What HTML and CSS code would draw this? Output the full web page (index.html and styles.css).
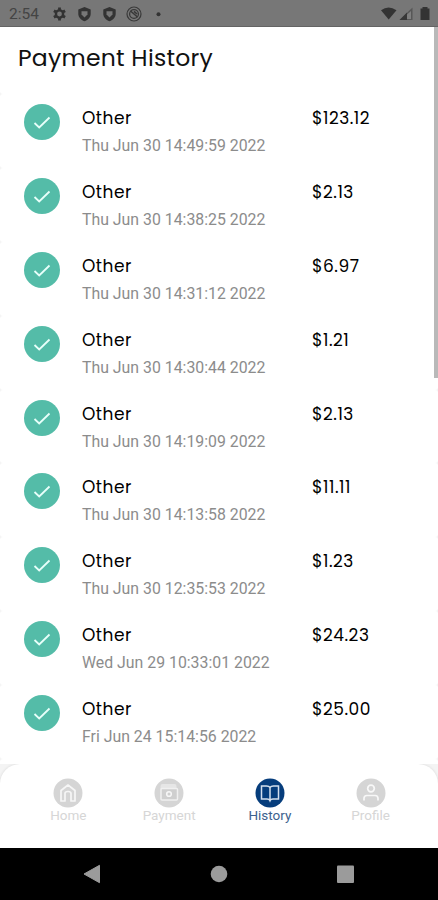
FILE: index.html
```html
<!DOCTYPE html>
<html lang="en">
<head>
    <meta charset="UTF-8">
    <meta name="viewport" content="width=device-width, initial-scale=1.0">
    <title>Payment History</title>
    <link rel="stylesheet" href="styles.css">
</head>
<body>

<div class="status-bar">
    <span class="clock">2:54</span>
    <svg class="status-left" width="112" height="16" viewBox="0 0 112 16">
        <circle cx="7.5" cy="8" r="3.6" fill="none" stroke="#333" stroke-width="2.4"/>
        <path d="M7.5 1.5v3M7.5 11.5v3M1.9 4.8l2.6 1.5M10.5 9.7l2.6 1.5M1.9 11.2l2.6-1.5M10.5 6.3l2.6-1.5" stroke="#333" stroke-width="2.8"/>
        <path d="M32.5 1l6.2 2.4v4.3c0 3.5-2.5 6.2-6.2 7.5-3.7-1.3-6.2-4-6.2-7.5V3.4z" fill="#333"/>
        <path d="M29.5 5.3h6v3.2l-3 3-3-3z" fill="#777"/>
        <path d="M57.5 1l6.2 2.4v4.3c0 3.5-2.5 6.2-6.2 7.5-3.7-1.3-6.2-4-6.2-7.5V3.4z" fill="#333"/>
        <path d="M54.5 5.3h6v3.2l-3 3-3-3z" fill="#777"/>
        <circle cx="82" cy="8" r="7" fill="none" stroke="#393939" stroke-width="1.2"/>
        <circle cx="82" cy="8" r="4.4" fill="none" stroke="#393939" stroke-width="1.3"/>
        <path d="M78.5 5l7 6M82 5.3l3 2.7" stroke="#393939" stroke-width="1.6"/>
        <circle cx="106.5" cy="8.2" r="2" fill="#333"/>
    </svg>
    <svg class="status-right" width="52" height="16" viewBox="0 0 52 16">
        <path d="M3 4.2Q10.5-1 18.5 4.2L10.700 13.500z" fill="#333"/>
        <path d="M34.500 1.500V14H21.500z" fill="#575757"/>
        <path d="M33 5v8h-4V8.500z" fill="#7f7f7f"/>
        <path d="M21.500 14L29 6.500V14z" fill="#383838"/>
        <path d="M42.500 2.500h2V1h5v1.500h2V14h-9z" fill="#333"/>
    </svg>
</div>

<div class="history" id="history">
    <h1>Payment History</h1>
    <div id="paymentList"></div>
    <div class="payment"></div>
    <div class="scroll-thumb"></div>
</div>

<div class="tabs">
    <div class="tab">
        <svg width="30" height="30" viewBox="0 0 30 30">
            <circle cx="15" cy="15" r="14.500" fill="#d5d5d5"/>
            <path d="M8 23V12.500L15 7l7 5.500V23h-4v-7.500q0-2-3-2t-3 2V23z" fill="none" stroke="#f6f6f6" stroke-width="1.700" stroke-linejoin="round"/>
        </svg>
        <span>Home</span>
    </div>
    <div class="tab">
        <svg width="30" height="30" viewBox="0 0 30 30">
            <circle cx="15" cy="15" r="14.500" fill="#d5d5d5"/>
            <path d="M6.500 11V8q0-2 2-2h12q2 0 2 2v3" fill="#e6e6e6"/>
            <rect x="7" y="10.500" width="16.500" height="11.500" rx="1" fill="#cfcfcf" stroke="#f0f0f0" stroke-width="1.500"/>
            <circle cx="15" cy="16" r="2.300" fill="none" stroke="#f6f6f6" stroke-width="1.600"/>
        </svg>
        <span>Payment</span>
    </div>
    <div class="tab active">
        <svg width="30" height="30" viewBox="0 0 30 30">
            <circle cx="15" cy="15" r="14.500" fill="#063d7c"/>
            <path d="M15 9.500Q14 8 11.500 8H6.500v13h5.500q2.300 0 3 1.700.7-1.700 3-1.700h5.500V8h-5Q16 8 15 9.500zM15 9.500V22" fill="none" stroke="#d5e0ed" stroke-width="1.500"/>
        </svg>
        <span>History</span>
    </div>
    <div class="tab">
        <svg width="30" height="30" viewBox="0 0 30 30">
            <circle cx="15" cy="15" r="14.500" fill="#d5d5d5"/>
            <circle cx="15" cy="10.500" r="3.300" fill="none" stroke="#f8f8f8" stroke-width="1.700"/>
            <path d="M8 22.500v-2q0-3 3-3h8q3 0 3 3v2" fill="none" stroke="#f8f8f8" stroke-width="1.700"/>
        </svg>
        <span>Profile</span>
    </div>
</div>

<div class="system-nav">
    <svg width="18" height="20" viewBox="0 0 18 20"><path d="M1 10L16.500 1.300v17.400z" fill="#9b9b9b" stroke="#9b9b9b" stroke-linejoin="round"/></svg>
    <svg width="18" height="20" viewBox="0 0 18 20"><circle cx="9" cy="10" r="8.300" fill="#9b9b9b"/></svg>
    <svg width="18" height="20" viewBox="0 0 18 20"><rect x="0" y="1.500" width="17" height="17.500" rx="1" fill="#9b9b9b"/></svg>
</div>

<script>
    const payments = [
        ['Thu Jun 30 14:49:59 2022', '$123.12'],
        ['Thu Jun 30 14:38:25 2022', '$2.13'],
        ['Thu Jun 30 14:31:12 2022', '$6.97'],
        ['Thu Jun 30 14:30:44 2022', '$1.21'],
        ['Thu Jun 30 14:19:09 2022', '$2.13'],
        ['Thu Jun 30 14:13:58 2022', '$11.11'],
        ['Thu Jun 30 12:35:53 2022', '$1.23'],
        ['Wed Jun 29 10:33:01 2022', '$24.23'],
        ['Fri Jun 24 15:14:56 2022', '$25.00']
    ];

    document.getElementById('paymentList').innerHTML = payments.map(([date, amount]) => `
        <div class="payment">
            <svg class="check" width="36" height="36" viewBox="0 0 36 36">
                <circle cx="18" cy="18" r="18" fill="#54bca8"/>
                <path d="M10.500 19l4.700 4.500L25.500 13.500" fill="none" stroke="#e8fffa" stroke-width="1.800"/>
            </svg>
            <div class="details">
                <div class="name">Other</div>
                <div class="date">${date}</div>
            </div>
            <div class="amount">${amount}</div>
        </div>`).join('');
</script>

</body>
</html>
```
FILE: styles.css
```css
* {
    box-sizing: border-box;
}

body {
    margin: 0;
    height: 900px;
    display: flex;
    flex-direction: column;
    overflow: hidden;
    font-family: Roboto, sans-serif;
    background: #f4f4f4;
}

.status-bar {
    flex: none;
    height: 27px;
    display: flex;
    align-items: center;
    padding: 1px 8px 0 9px;
    background: #777;
    border-bottom: 1px solid #646464;
}

.clock {
    width: 43px;
    font-size: 15.5px;
    color: #444;
}

.status-right {
    margin-left: auto;
}

.history {
    position: relative;
    flex: none;
    height: 737px;
    overflow: hidden;
}

h1 {
    margin: 0;
    height: 67.4px;
    padding-left: 18px;
    font: 400 23.5px/62px Poppins, Inter, sans-serif;
    letter-spacing: 0.25px;
    color: #111;
    background: #fff;
    border-radius: 0 0 3px 3px;
}

.payment {
    display: flex;
    height: 73.8px;
    padding: 10px 24px 0;
    background: #fff;
    border-radius: 3px;
}

.details {
    width: 230px;
    margin-left: 22px;
}

.name,
.amount {
    font: 400 17px/28px Poppins, Inter, sans-serif;
    letter-spacing: 0.5px;
    color: #000;
}

.date {
    font-size: 15.85px;
    line-height: 28px;
    color: #8c8c8c;
    white-space: nowrap;
}

.scroll-thumb {
    position: absolute;
    top: 0;
    right: 0;
    width: 4px;
    height: 351px;
    background: #b9b9b9;
}

.tabs {
    flex: none;
    height: 84px;
    display: flex;
    padding: 14px 17px 0 18px;
    background: #fff;
    border-radius: 20px 20px 0 0;
    box-shadow: 0 0 3px rgba(0, 0, 0, 0.12);
}

.tab {
    flex: 1;
    display: flex;
    flex-direction: column;
    align-items: center;
    font-size: 13.5px;
    line-height: 14px;
    color: #d6d6d6;
}

.tab.active {
    color: #3d618e;
}

.system-nav {
    flex: 1;
    display: flex;
    justify-content: center;
    gap: 109px;
    padding-top: 16px;
    background: #000;
}
```
